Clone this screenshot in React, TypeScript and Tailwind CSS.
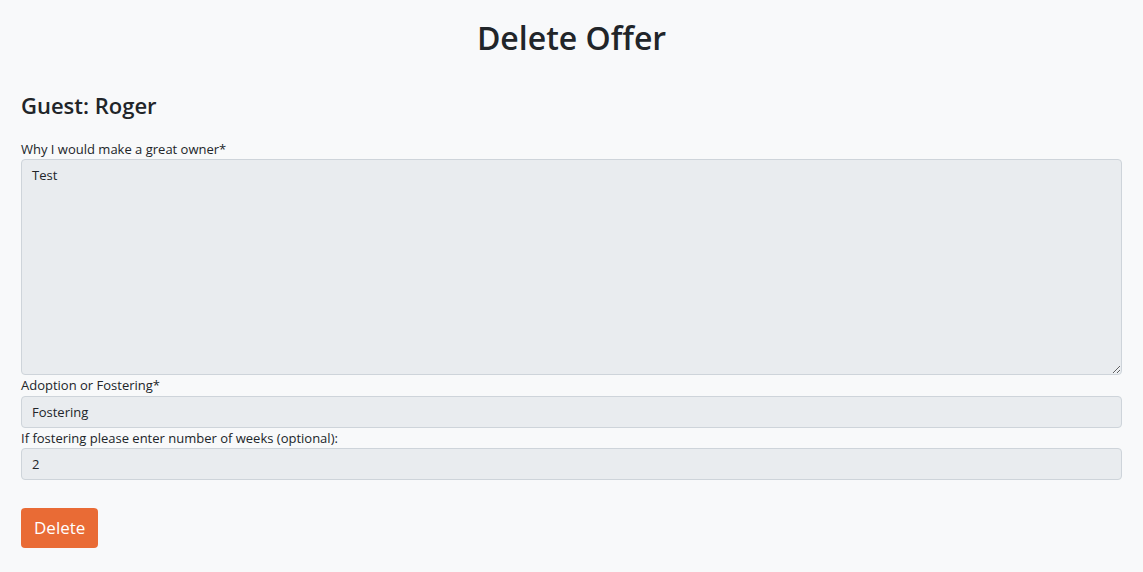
import React from "react";

export default function App() {
  return (
    <div
      className="min-h-[572px] w-full bg-[#f8f9fa] text-[#212529]"
      style={{ fontFamily: '"Open Sans", "Noto Sans", sans-serif' }}
    >
      <div className="px-[21px] pt-[19px] pb-6">
        <h1 className="text-center text-[32px] leading-[38px] font-semibold">Delete Offer</h1>
        <h2 className="mt-[34px] text-[22px] leading-[28px] font-semibold">Guest: Roger</h2>
        <form className="mt-[20px] flex flex-col" onSubmit={(e) => e.preventDefault()}>
          <label className="text-[13px] leading-[20px]">Why I would make a great owner*</label>
          <textarea
            disabled
            defaultValue="Test"
            className="h-[216px] w-full resize-y rounded-[4px] border border-[#ced4da] bg-[#e9ecef] px-[10px] py-[5px] text-[13px] leading-[21px] text-[#212529]"
          />
          <label className="text-[13px] leading-[21px]">Adoption or Fostering*</label>
          <input
            disabled
            defaultValue="Fostering"
            className="h-[32px] w-full rounded-[4px] border border-[#ced4da] bg-[#e9ecef] px-[10px] text-[13px] leading-[20px] text-[#212529]"
          />
          <label className="text-[13px] leading-[20px]">If fostering please enter number of weeks (optional):</label>
          <input
            disabled
            defaultValue="2"
            className="h-[32px] w-full rounded-[4px] border border-[#ced4da] bg-[#e9ecef] px-[10px] text-[13px] leading-[20px] text-[#212529]"
          />
          <div className="mt-[28px]">
            <button
              type="submit"
              className="h-[40px] rounded-[4px] bg-[#e96b35] px-[13px] text-[17px] leading-[24px] text-white"
            >
              Delete
            </button>
          </div>
        </form>
      </div>
    </div>
  );
}
